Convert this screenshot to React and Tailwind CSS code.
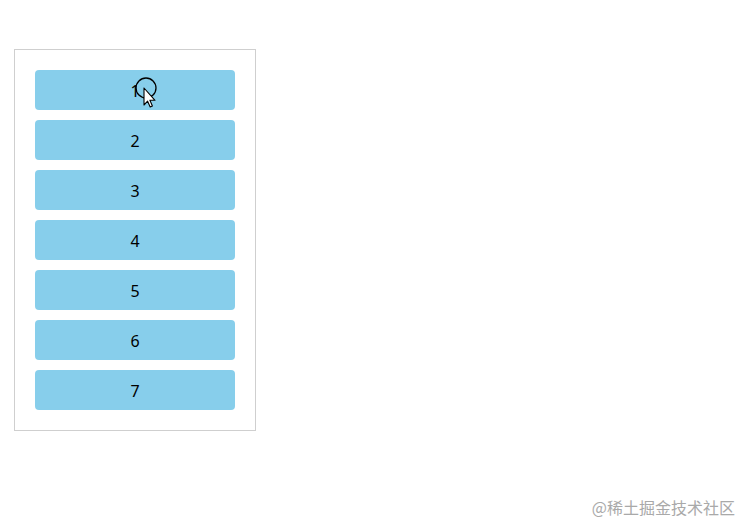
import React from 'react';

const items = [1, 2, 3, 4, 5, 6, 7];

function Cursor() {
  return (
    <svg className="absolute left-[100px] top-[7px] pointer-events-none" width="26" height="34" viewBox="0 0 26 34">
      <circle cx="11" cy="11" r="10" fill="none" stroke="#000" strokeWidth="1.3" />
      <path d="M9 11 L9 28 L12.6 24.2 L15.2 30 L17.4 29 L14.9 23.3 L20 23.3 Z" fill="#fff" stroke="#000" strokeWidth="1.1" strokeLinejoin="round" />
    </svg>
  );
}

export default function App() {
  return (
    <div className="relative w-[747px] h-[530px] bg-white font-['Noto_Sans','Noto_Sans_CJK_SC',sans-serif]">
      <div className="absolute left-[14px] top-[49px] w-[242px] border border-[#cfcfcf] p-5 flex flex-col gap-[10px]">
        {items.map((n) => (
          <div key={n} className="relative h-10 rounded bg-[#87ceeb] flex items-center justify-center pt-[2px] text-base text-black">
            {n}
            {n === 1 && <Cursor />}
          </div>
        ))}
      </div>
      <div className="absolute right-[12px] bottom-[11px] text-[16px] text-[#a9a9a9] font-['Noto_Sans_CJK_SC',sans-serif]">
        @稀土掘金技术社区
      </div>
    </div>
  );
}
